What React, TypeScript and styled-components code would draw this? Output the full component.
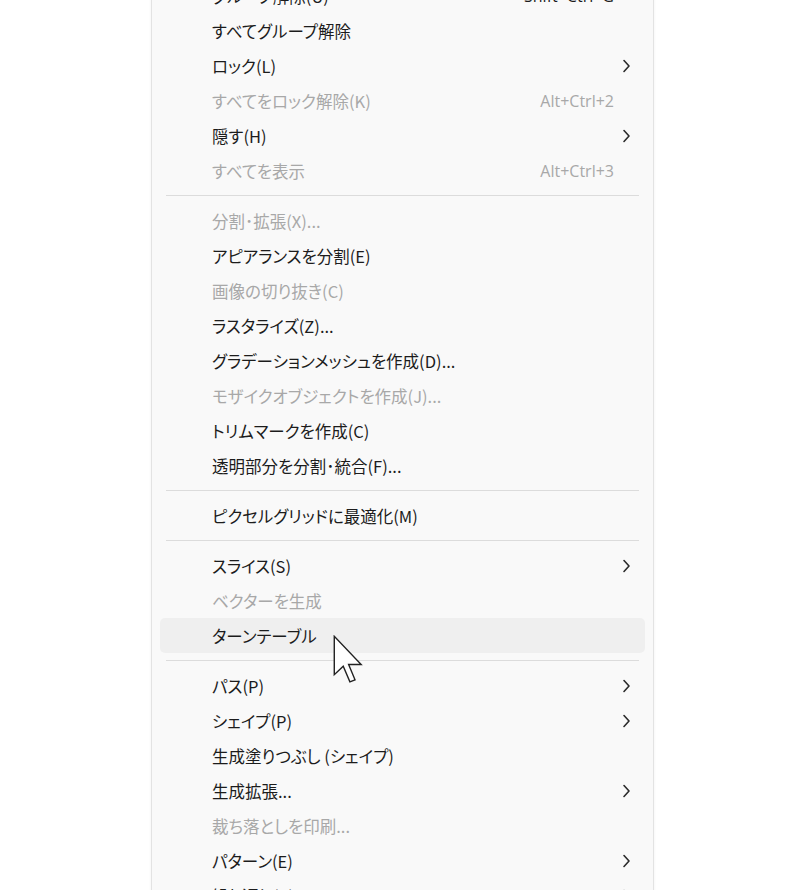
import React from 'react'
import styled, { createGlobalStyle } from 'styled-components'

interface MenuEntry {
  label?: string
  shortcut?: string
  disabled?: boolean
  submenu?: boolean
  hovered?: boolean
  separator?: boolean
}

const items: MenuEntry[] = [
  { label: 'グループ解除(U)', shortcut: 'Shift+Ctrl+G' },
  { label: 'すべてグループ解除' },
  { label: 'ロック(L)', submenu: true },
  { label: 'すべてをロック解除(K)', shortcut: 'Alt+Ctrl+2', disabled: true },
  { label: '隠す(H)', submenu: true },
  { label: 'すべてを表示', shortcut: 'Alt+Ctrl+3', disabled: true },
  { separator: true },
  { label: '分割･拡張(X)...', disabled: true },
  { label: 'アピアランスを分割(E)' },
  { label: '画像の切り抜き(C)', disabled: true },
  { label: 'ラスタライズ(Z)...' },
  { label: 'グラデーションメッシュを作成(D)...' },
  { label: 'モザイクオブジェクトを作成(J)...', disabled: true },
  { label: 'トリムマークを作成(C)' },
  { label: '透明部分を分割･統合(F)...' },
  { separator: true },
  { label: 'ピクセルグリッドに最適化(M)' },
  { separator: true },
  { label: 'スライス(S)', submenu: true },
  { label: 'ベクターを生成', disabled: true },
  { label: 'ターンテーブル', hovered: true },
  { separator: true },
  { label: 'パス(P)', submenu: true },
  { label: 'シェイプ(P)', submenu: true },
  { label: '生成塗りつぶし (シェイプ)' },
  { label: '生成拡張...', submenu: true },
  { label: '裁ち落としを印刷...', disabled: true },
  { label: 'パターン(E)', submenu: true },
  { label: '繰り返し(R)', submenu: true },
]

const GlobalStyle = createGlobalStyle`
  html, body {
    margin: 0;
    padding: 0;
    background: #ffffff;
  }
  body {
    font-family: "Noto Sans CJK JP", "Noto Sans", sans-serif;
  }
`

const Screen = styled.div`
  width: 800px;
  height: 890px;
  overflow: hidden;
  padding-left: 151px;
  box-sizing: border-box;
`

const Panel = styled.div`
  width: 503px;
  margin-top: -27px;
  padding: 4px 8px;
  box-sizing: border-box;
  background: #f9f9f9;
  border: 1px solid #e3e3e3;
  box-shadow: 0 0 3px rgba(0, 0, 0, 0.06);
`

const Row = styled.div<{ $disabled?: boolean; $hovered?: boolean }>`
  position: relative;
  display: grid;
  grid-template-columns: 1fr auto 20px;
  align-items: center;
  column-gap: 2px;
  height: 35px;
  padding: 0 9px 0 52px;
  border-radius: 5px;
  background: ${(p) => (p.$hovered ? '#efefef' : 'transparent')};
  color: ${(p) => (p.$disabled ? '#a8a8a8' : '#1c1c1c')};
  font-size: 16.5px;
  font-feature-settings: "palt";
`

const Label = styled.span`
  white-space: nowrap;
`

const Shortcut = styled.span`
  white-space: nowrap;
  font-family: "Open Sans", "Noto Sans", sans-serif;
  font-size: 16px;
  letter-spacing: 0;
`

const Chevron = styled.span`
  display: flex;
  align-items: center;
  justify-content: center;
  color: #2a2a2a;
`

const Separator = styled.div`
  height: 1px;
  margin: 7px 6px;
  background: #dcdcdc;
`

const Cursor = styled.svg`
  position: absolute;
  left: 173px;
  top: 17px;
  pointer-events: none;
`

const ArrowIcon = () => (
  <svg width="9" height="14" viewBox="0 0 9 14">
    <polyline
      points="2,1.5 7,7 2,12.5"
      fill="none"
      stroke="currentColor"
      strokeWidth="1.6"
      strokeLinecap="round"
      strokeLinejoin="round"
    />
  </svg>
)

const PointerCursor = () => (
  <Cursor width="32" height="50" viewBox="0 0 12.5 19.5">
    <path
      d="M0.5 0.5 L0.5 15.5 L4 12.2 L6.6 18.3 L8.6 17.5 L6.1 11.5 L11 11.5 Z"
      fill="#ffffff"
      stroke="#222222"
      strokeWidth="0.55"
      strokeLinejoin="miter"
    />
  </Cursor>
)

const App: React.FC = () => {
  return (
    <>
      <GlobalStyle />
      <Screen>
        <Panel>
          {items.map((item, i) =>
            item.separator ? (
              <Separator key={i} />
            ) : (
              <Row key={i} $disabled={item.disabled} $hovered={item.hovered}>
                <Label>{item.label}</Label>
                <Shortcut>{item.shortcut}</Shortcut>
                <Chevron>{item.submenu ? <ArrowIcon /> : null}</Chevron>
                {item.hovered ? <PointerCursor /> : null}
              </Row>
            )
          )}
        </Panel>
      </Screen>
    </>
  )
}

export default App
